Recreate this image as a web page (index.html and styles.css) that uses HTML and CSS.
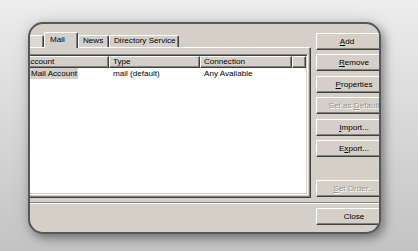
FILE: index.html
```html
<!DOCTYPE html>
<html lang="en">
<head>
    <meta charset="UTF-8">
    <title>Internet Accounts</title>
    <link rel="stylesheet" href="styles.css">
</head>
<body>

<div class="window">
    <div class="top">
        <div class="left">
            <div class="tabs">
                <div class="tab tab-all"></div>
                <div class="tab tab-mail selected">Mail</div>
                <div class="tab tab-news">News</div>
                <div class="tab tab-dir">Directory Service</div>
            </div>
            <div class="panel">
                <div class="list">
                    <div class="list-head">
                        <div class="col c1">Account</div>
                        <div class="col c2">Type</div>
                        <div class="col c3">Connection</div>
                        <div class="col c4"></div>
                    </div>
                    <div class="list-row">
                        <div class="cell c1"><span class="sel">Mail Account</span></div>
                        <div class="cell c2">mail (default)</div>
                        <div class="cell c3">Any Available</div>
                    </div>
                </div>
            </div>
        </div>

        <div class="buttons">
            <button class="btn btn-add"><u>A</u>dd</button>
            <button class="btn"><u>R</u>emove</button>
            <button class="btn"><u>P</u>roperties</button>
            <button class="btn" disabled>Set as <u>D</u>efault</button>
            <button class="btn"><u>I</u>mport...</button>
            <button class="btn">E<u>x</u>port...</button>
            <button class="btn set-order" disabled><u>S</u>et Order...</button>
        </div>
    </div>

    <div class="separator"></div>

    <div class="bottom">
        <button class="btn">Close</button>
    </div>
</div>

</body>
</html>
```

FILE: styles.css
```css
body {
    margin: 0;
    height: 251px;
    overflow: hidden;
    background: linear-gradient(#ededed, #c3c3c3);
    font-family: "Liberation Sans", Arial, sans-serif;
    font-size: 8.1px;
    color: #000;
}

/* the dialog, cropped by a rounded frame */
.window {
    box-sizing: border-box;
    width: 353px;
    height: 212px;
    margin: 22px 0 0 28px;
    padding-top: 8px;
    border: 2px solid #575757;
    border-radius: 15px;
    background-color: #d4d0c8;
    overflow: hidden;
    box-shadow: 3px 4px 10px rgba(0, 0, 0, 0.38), 0 0 18px rgba(0, 0, 0, 0.12);
}

.top {
    display: flex;
}

.left {
    width: 309px;
    margin-left: -28px;
    flex-shrink: 0;
}

/* tabs */
.tabs {
    display: flex;
    align-items: flex-end;
    height: 15px;
    padding-left: 2px;
}

.tab {
    box-sizing: border-box;
    height: 12px;
    line-height: 10px;
    padding-left: 4px;
    border-top: 1px solid #fff;
    border-left: 1px solid #fff;
    border-right: 1px solid #404040;
    border-radius: 2px 2px 0 0;
    box-shadow: inset -1px 0 #808080;
    white-space: nowrap;
}

.tab-all { width: 40px; background-color: #dcd9d2; }
.tab-mail { width: 34px; padding-left: 5px; }
.tab-news { width: 31px; }
.tab-dir { width: 70px; }

.tab.selected {
    position: relative;
    z-index: 1;
    height: 16px;
    line-height: 13px;
    margin-bottom: -1px;
    background-color: #d4d0c8;
}

.panel {
    box-sizing: border-box;
    height: 151px;
    padding: 6px 2px 2px 13px;
    border-top: 1px solid #fff;
    border-left: 1px solid #fff;
    border-right: 1px solid #404040;
    border-bottom: 1px solid #404040;
    box-shadow: inset -1px -1px #808080;
}

/* list view */
.list {
    box-sizing: border-box;
    height: 100%;
    background-color: #fff;
    border: 1px solid;
    border-color: #808080 #fff #fff #808080;
    box-shadow: inset 1px 1px #404040, inset -1px -1px #d4d0c8;
    padding: 1px 1px 0 1px;
    overflow: hidden;
}

.list-head {
    display: flex;
    height: 12px;
}

.col {
    box-sizing: border-box;
    line-height: 10px;
    padding-left: 3px;
    background-color: #d4d0c8;
    border-top: 1px solid #fff;
    border-left: 1px solid #fff;
    border-right: 1px solid #404040;
    border-bottom: 1px solid #404040;
    box-shadow: inset -1px -1px #808080;
    white-space: nowrap;
}

.list-row {
    display: flex;
    height: 12px;
    line-height: 11px;
}

.cell {
    box-sizing: border-box;
    padding-left: 4px;
    white-space: nowrap;
}

.c1 { width: 91px; }
.c2 { width: 91px; }
.c3 { width: 92px; }
.c4 { flex: 1; }

.list-head .c1 { padding-left: 6px; }
.list-row .c1 { padding-left: 12px; }

.sel {
    display: inline-block;
    padding: 0 1px;
    background-color: #d4d0c8;
}

/* push buttons */
.buttons {
    display: flex;
    flex-direction: column;
    gap: 4.4px;
    margin-left: 5px;
    padding-top: 1px;
}

.btn {
    box-sizing: border-box;
    width: 76px;
    height: 17px;
    padding: 0;
    font-family: inherit;
    font-size: inherit;
    color: #000;
    background-color: #d4d0c8;
    border: 1px solid;
    border-color: #fff #404040 #404040 #fff;
    box-shadow: inset -1px -1px #808080;
    border-radius: 0;
    flex-shrink: 0;
}

.btn-add {
    padding-right: 14px;
}

.btn:disabled {
    color: #9a968f;
    text-shadow: 1px 1px 0 #fff;
}

.set-order {
    margin-top: auto;
    margin-bottom: 1px;
}

.separator {
    margin-top: 4px;
    border-top: 1px solid #808080;
    border-bottom: 1px solid #fff;
}

.bottom {
    display: flex;
    padding: 4px 0 0 286px;
}
```
